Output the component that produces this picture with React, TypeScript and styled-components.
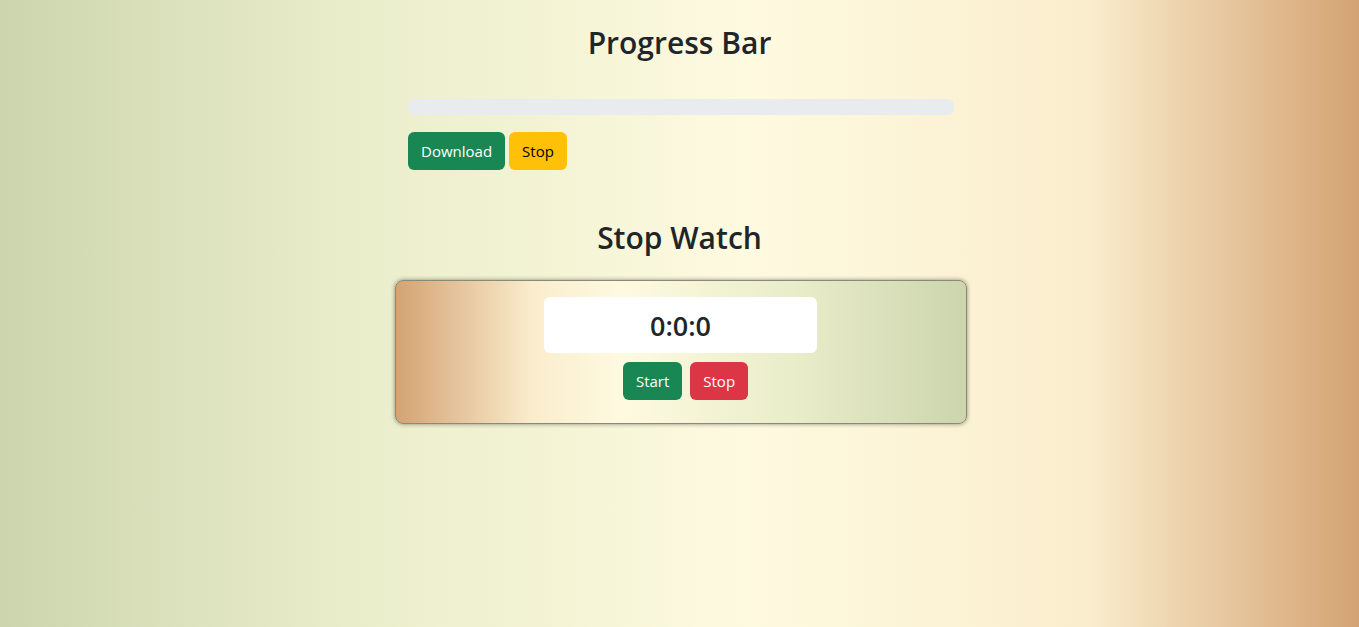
import React, { useEffect, useRef, useState } from "react";
import styled, { createGlobalStyle } from "styled-components";

const GlobalStyle = createGlobalStyle`
  html, body {
    margin: 0;
    padding: 0;
  }
  body {
    min-height: 100vh;
    font-family: "Open Sans", "Noto Sans", "Liberation Sans", sans-serif;
    color: #212529;
    background: linear-gradient(to right, #ccd5ae, #e9edc9 25%, #fefae0 55%, #faedcd 80%, #d4a373);
  }
`;

const Page = styled.main`
  min-height: 100vh;
  display: flex;
  flex-direction: column;
  align-items: center;
  padding-top: 24px;
  box-sizing: border-box;
`;

const Title = styled.h2`
  margin: 0;
  font-size: 30px;
  font-weight: 600;
  line-height: 38px;
  text-align: center;
`;

const ProgressSection = styled.section`
  width: 546px;
  margin-top: 37px;
  margin-left: 3px;
`;

const Track = styled.div`
  height: 16px;
  border-radius: 6px;
  background: #e9ecef;
  overflow: hidden;
`;

const Fill = styled.div`
  height: 100%;
  background: #0d6efd;
  transition: width 0.2s linear;
`;

const ButtonRow = styled.div<{ $gap: number; $center?: boolean }>`
  display: flex;
  gap: ${(p) => p.$gap}px;
  justify-content: ${(p) => (p.$center ? "center" : "flex-start")};
`;

const Button = styled.button<{ $variant: "success" | "warning" | "danger" }>`
  font-family: inherit;
  font-size: 15px;
  line-height: 24px;
  padding: 6px 12px;
  border: 1px solid transparent;
  border-radius: 6px;
  cursor: pointer;
  color: ${(p) => (p.$variant === "warning" ? "#000" : "#fff")};
  background: ${(p) =>
    p.$variant === "success" ? "#198754" : p.$variant === "warning" ? "#ffc107" : "#dc3545"};
`;

const StopWatchTitle = styled(Title)`
  margin-top: 49px;
`;

const Card = styled.section`
  width: 572px;
  margin-top: 23px;
  margin-left: 2px;
  box-sizing: border-box;
  padding: 16px 0 23px;
  border-radius: 8px;
  border: 1px solid #8a8a78;
  box-shadow: 0 0 4px rgba(0, 0, 0, 0.45);
  background: linear-gradient(to right, #d4a373, #faedcd 24%, #fefae0 40%, #e9edc9 70%, #ccd5ae);
  display: flex;
  flex-direction: column;
  align-items: center;
  gap: 9px;
`;

const Display = styled.div`
  width: 273px;
  height: 56px;
  box-sizing: border-box;
  border-radius: 6px;
  background: #fff;
  display: flex;
  align-items: center;
  justify-content: center;
  font-size: 27px;
  font-weight: 600;
`;

export default function App() {
  const [progress, setProgress] = useState(0);
  const [seconds, setSeconds] = useState(0);
  const dl = useRef<number | null>(null);
  const sw = useRef<number | null>(null);

  const download = () => {
    if (dl.current) return;
    dl.current = window.setInterval(() => {
      setProgress((v) => (v >= 100 ? 100 : v + 1));
    }, 100);
  };
  const stopDownload = () => {
    if (dl.current) window.clearInterval(dl.current);
    dl.current = null;
  };
  const start = () => {
    if (sw.current) return;
    sw.current = window.setInterval(() => setSeconds((s) => s + 1), 1000);
  };
  const stop = () => {
    if (sw.current) window.clearInterval(sw.current);
    sw.current = null;
  };

  useEffect(() => () => {
    stopDownload();
    stop();
  }, []);

  const h = Math.floor(seconds / 3600);
  const m = Math.floor((seconds % 3600) / 60);
  const s = seconds % 60;

  return (
    <>
      <GlobalStyle />
      <Page>
        <Title>Progress Bar</Title>
        <ProgressSection>
          <Track>
            <Fill style={{ width: `${progress}%` }} />
          </Track>
          <ButtonRow $gap={4} style={{ marginTop: 17 }}>
            <Button $variant="success" onClick={download}>Download</Button>
            <Button $variant="warning" onClick={stopDownload}>Stop</Button>
          </ButtonRow>
        </ProgressSection>
        <StopWatchTitle>Stop Watch</StopWatchTitle>
        <Card>
          <Display>{`${h}:${m}:${s}`}</Display>
          <ButtonRow $gap={8} $center style={{ marginLeft: 10 }}>
            <Button $variant="success" onClick={start}>Start</Button>
            <Button $variant="danger" onClick={stop}>Stop</Button>
          </ButtonRow>
        </Card>
      </Page>
    </>
  );
}
